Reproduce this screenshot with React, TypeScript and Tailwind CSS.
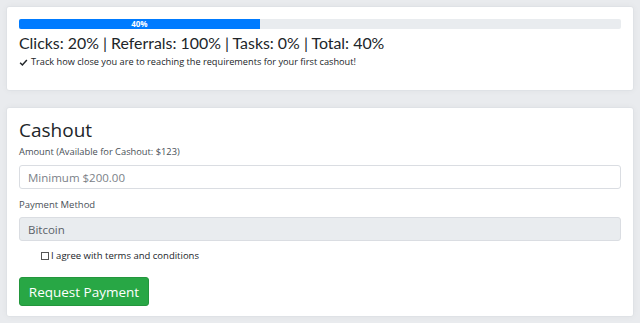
import React from "react";

export default function App() {
  return (
    <div
      className="w-[640px] h-[323px] bg-[#e9ebee] p-[6px] flex flex-col gap-[16px] overflow-hidden"
      style={{ fontFamily: '"Open Sans", "Liberation Sans", sans-serif' }}
    >
      <div className="bg-white border border-[#dfe2e6] rounded-[3px] h-[86px] px-[12px] pt-[12px] shadow-[0_0_6px_rgba(0,0,0,0.04)]">
        <div className="h-[10px] w-full bg-[#e9ecef] rounded-[2px] overflow-hidden flex">
          <div className="h-full w-[40%] bg-[#007bff] flex items-center justify-center text-white text-[8px] font-bold leading-none">
            40%
          </div>
        </div>
        <div
          className="text-[#212529] text-[15.9px] leading-[20px] mt-[4px]"
          style={{ fontFamily: 'Lato, "Open Sans", sans-serif' }}
        >
          Clicks: 20% | Referrals: 100% | Tasks: 0% | Total: 40%
        </div>
        <div className="flex items-center gap-[3px] text-[#212529] text-[9.2px] mt-[3px] leading-[12px]">
          <svg width="9" height="9" viewBox="0 0 16 16" className="shrink-0">
            <path d="M2 8.5 L6 12.5 L14 3.5" fill="none" stroke="#212529" strokeWidth="2.6" />
          </svg>
          <span>Track how close you are to reaching the requirements for your first cashout!</span>
        </div>
      </div>

      <div className="bg-white border border-[#dfe2e6] rounded-[3px] h-[211px] px-[12px] pt-[10px] shadow-[0_0_6px_rgba(0,0,0,0.04)] flex flex-col">
        <div className="text-[#212529] text-[19px] leading-[24px]">Cashout</div>
        <div className="text-[#495057] text-[9.3px] leading-[12px] mt-[4px]">Amount (Available for Cashout: $123)</div>
        <div className="mt-[7px] h-[24px] border border-[#dadde2] rounded-[3px] flex items-center px-[8px] text-[#7b8188] text-[11.5px]">
          Minimum $200.00
        </div>
        <div className="text-[#495057] text-[9.5px] leading-[12px] mt-[10px]">Payment Method</div>
        <div className="mt-[6px] h-[24px] border border-[#dadde2] bg-[#e9ecef] rounded-[3px] flex items-center px-[8px] text-[#5a6168] text-[11.5px]">
          Bitcoin
        </div>
        <div className="flex items-center ml-[22px] mt-[9px] gap-[2px] text-[#212529] text-[9.5px] leading-[12px]">
          <span className="inline-block w-[8px] h-[8px] border border-[#555] bg-white shrink-0"></span>
          <span>I agree with terms and conditions</span>
        </div>
        <div className="mt-[15px]">
          <button className="h-[29px] w-[130px] bg-[#28a745] border border-[#23963d] rounded-[3px] text-white text-[13.5px] flex items-center justify-center">
            Request Payment
          </button>
        </div>
      </div>
    </div>
  );
}
